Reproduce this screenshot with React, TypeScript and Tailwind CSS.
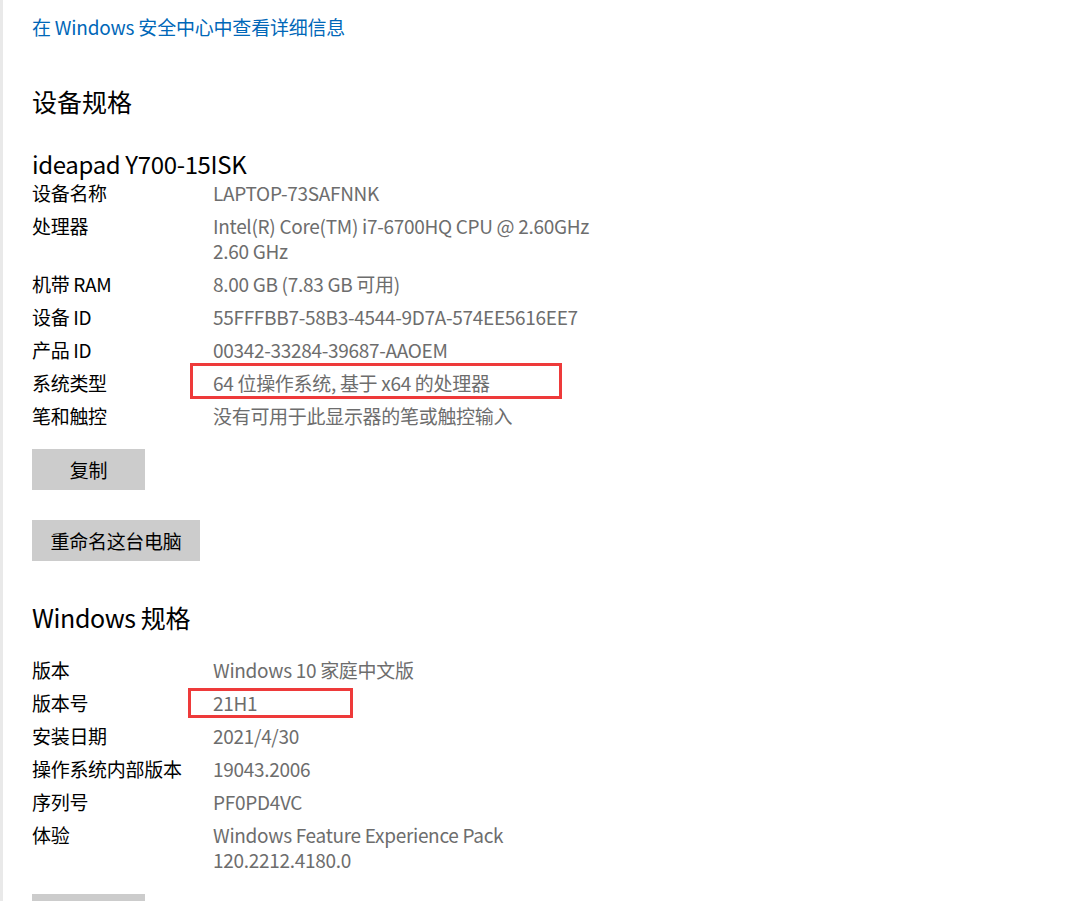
const font = { fontFamily: '"Noto Sans CJK SC", "Noto Sans", sans-serif' };

type Spec = { label: string; value: string[]; mark?: 'wide' | 'narrow' };

const device: Spec[] = [
  { label: '设备名称', value: ['LAPTOP-73SAFNNK'] },
  { label: '处理器', value: ['Intel(R) Core(TM) i7-6700HQ CPU @ 2.60GHz', '2.60 GHz'] },
  { label: '机带 RAM', value: ['8.00 GB (7.83 GB 可用)'] },
  { label: '设备 ID', value: ['55FFFBB7-58B3-4544-9D7A-574EE5616EE7'] },
  { label: '产品 ID', value: ['00342-33284-39687-AAOEM'] },
  { label: '系统类型', value: ['64 位操作系统, 基于 x64 的处理器'], mark: 'wide' },
  { label: '笔和触控', value: ['没有可用于此显示器的笔或触控输入'] },
];

const windows: Spec[] = [
  { label: '版本', value: ['Windows 10 家庭中文版'] },
  { label: '版本号', value: ['21H1'], mark: 'narrow' },
  { label: '安装日期', value: ['2021/4/30'] },
  { label: '操作系统内部版本', value: ['19043.2006'] },
  { label: '序列号', value: ['PF0PD4VC'] },
  { label: '体验', value: ['Windows Feature Experience Pack', '120.2212.4180.0'] },
];

function SpecRows({ rows }: { rows: Spec[] }) {
  return (
    <div className="flex flex-col gap-2">
      {rows.map((r) => (
        <div key={r.label} className="flex text-[19px] leading-[25px] tracking-[-0.3px]">
          <div className="w-[181px] shrink-0 text-black">{r.label}</div>
          <div className="relative text-[#6d6d6d]">
            {r.value.map((v) => (
              <div key={v}>{v}</div>
            ))}
            {r.mark === 'wide' && (
              <div className="absolute left-[-23px] top-[-7px] h-[36px] w-[372px] border-[3px] border-[#ee3a3a]" />
            )}
            {r.mark === 'narrow' && (
              <div className="absolute left-[-25px] top-[-2px] h-[30px] w-[165px] border-[3px] border-[#ee3a3a]" />
            )}
          </div>
        </div>
      ))}
    </div>
  );
}

function GrayButton({ children, className = '' }: { children?: React.ReactNode; className?: string }) {
  return (
    <div
      className={`flex h-[41px] shrink-0 items-center justify-center whitespace-nowrap bg-[#cccccc] text-[19px] leading-[25px] tracking-[-0.3px] text-black ${className}`}
    >
      {children}
    </div>
  );
}

export default function App() {
  return (
    <div className="flex h-[901px] w-[1072px] overflow-hidden bg-white" style={font}>
      <div className="w-[3px] shrink-0 bg-[#e9e9e9]" />
      <div className="flex flex-col items-start pl-[29px] pt-[14px]">
        <a className="text-[19px] leading-[25px] tracking-[-0.2px] text-[#0067b8]">在 Windows 安全中心中查看详细信息</a>

        <h2 className="mt-[45px] text-[25px] leading-[34px] text-black">设备规格</h2>
        <div className="mt-[30px] text-[24px] leading-[32px] tracking-[-0.35px] text-black">ideapad Y700-15ISK</div>
        <SpecRows rows={device} />

        <GrayButton className="mt-[21px] w-[113px]">复制</GrayButton>
        <GrayButton className="mt-[30px] w-[168px]">重命名这台电脑</GrayButton>

        <h2 className="mt-[39px] text-[25px] leading-[34px] tracking-[-0.4px] text-black">Windows 规格</h2>
        <div className="mt-[23px]">
          <SpecRows rows={windows} />
        </div>

        <GrayButton className="mt-[22px] w-[113px]" />
      </div>
    </div>
  );
}
